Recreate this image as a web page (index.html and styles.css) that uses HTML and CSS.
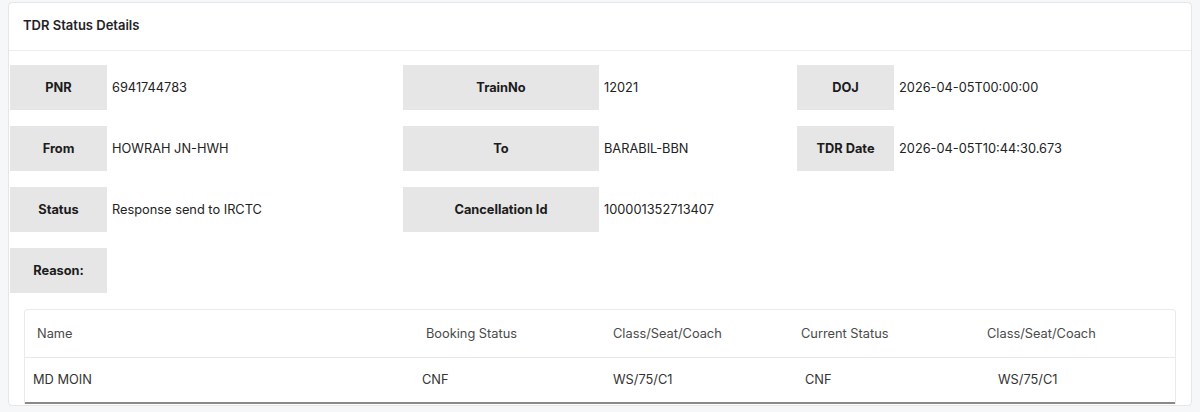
FILE: index.html
```html
<!DOCTYPE html>
<html>
<head>
<meta charset="utf-8">
<link rel="stylesheet" href="styles.css">
</head>
<body>
<div class="card">
  <div class="card-header">TDR Status Details</div>
  <div class="card-body">
    <div class="grid">
      <div class="item"><div class="label sm">PNR</div><div class="value">6941744783</div></div>
      <div class="item"><div class="label lg">TrainNo</div><div class="value">12021</div></div>
      <div class="item"><div class="label sm">DOJ</div><div class="value">2026-04-05T00:00:00</div></div>

      <div class="item"><div class="label sm">From</div><div class="value">HOWRAH JN-HWH</div></div>
      <div class="item"><div class="label lg">To</div><div class="value">BARABIL-BBN</div></div>
      <div class="item"><div class="label sm">TDR Date</div><div class="value">2026-04-05T10:44:30.673</div></div>

      <div class="item"><div class="label sm">Status</div><div class="value">Response send to IRCTC</div></div>
      <div class="item"><div class="label lg">Cancellation Id</div><div class="value">100001352713407</div></div>
      <div class="item"></div>

      <div class="item"><div class="label sm">Reason:</div><div class="value"></div></div>
    </div>
    <div class="table-wrap">
      <table class="pax">
        <colgroup>
          <col class="w1"><col class="w2"><col class="w3"><col class="w4"><col>
        </colgroup>
        <thead>
          <tr>
            <th class="c1">Name</th>
            <th class="c2">Booking Status</th>
            <th class="c3">Class/Seat/Coach</th>
            <th class="c4">Current Status</th>
            <th class="c5">Class/Seat/Coach</th>
          </tr>
        </thead>
        <tbody>
          <tr>
            <td class="c1">MD MOIN</td>
            <td class="c2">CNF</td>
            <td class="c3">WS/75/C1</td>
            <td class="c4">CNF</td>
            <td class="c5">WS/75/C1</td>
          </tr>
        </tbody>
      </table>
    </div>
  </div>
</div>
</body>
</html>
```
FILE: styles.css
```css
html, body {
  margin: 0;
  padding: 0;
  background: #f6f7f8;
  font-family: Inter, "Noto Sans", sans-serif;
  font-size: 12.8px;
  color: #212529;
}
.card {
  margin: 2px 8px 0 8px;
  background: #fff;
  border: 1px solid #e4e6e8;
  border-radius: 4px;
  height: 404px;
  box-sizing: border-box;
}
.card-header {
  height: 48px;
  box-sizing: border-box;
  padding: 0 0 3px 14px;
  display: flex;
  align-items: center;
  font-weight: 600;
  font-size: 13px;
  color: #1f2327;
  border-bottom: 1px solid #eceef0;
}
.card-body {
  padding: 14px 1px 0 1px;
}
.grid {
  display: grid;
  grid-template-columns: 393px 394px 393px;
  row-gap: 16px;
}
.item {
  display: flex;
  align-items: center;
  height: 45px;
}
.label {
  height: 45px;
  background: #e6e6e6;
  display: flex;
  align-items: center;
  justify-content: center;
  font-weight: 700;
  color: #1c1c1c;
  flex: none;
}
.label.sm { width: 97px; }
.label.lg { width: 196px; }
.value {
  padding-left: 5px;
  color: #222;
}
.table-wrap {
  margin: 16px 14px 0 14px;
  border: 1px solid #e8eaec;
  border-bottom: none;
  border-radius: 4px 4px 0 0;
}
.pax {
  width: 100%;
  table-layout: fixed;
  border-collapse: collapse;
  color: #333;
}
.pax col.w1 { width: 388px; }
.pax col.w2 { width: 187px; }
.pax col.w3 { width: 188px; }
.pax col.w4 { width: 187px; }
.pax th, .pax td {
  box-sizing: border-box;
  text-align: left;
  padding: 0;
  white-space: nowrap;
}
.pax th {
  font-weight: 400;
  color: #4a4a4a;
  height: 47px;
  border-bottom: 1px solid #e6e8ea;
}
.pax td {
  height: 46px;
  border-bottom: 2px solid #8a8a8a;
}
.pax th.c1 { padding-left: 12px; }
.pax td.c1 { padding-left: 8px; }
.pax th.c2 { padding-left: 13px; }
.pax td.c2 { padding-left: 9px; }
.pax th.c3 { padding-left: 13px; }
.pax td.c3 { padding-left: 13px; }
.pax th.c4 { padding-left: 13px; }
.pax td.c4 { padding-left: 17px; }
.pax th.c5 { padding-left: 12px; }
.pax td.c5 { padding-left: 23px; }
```
